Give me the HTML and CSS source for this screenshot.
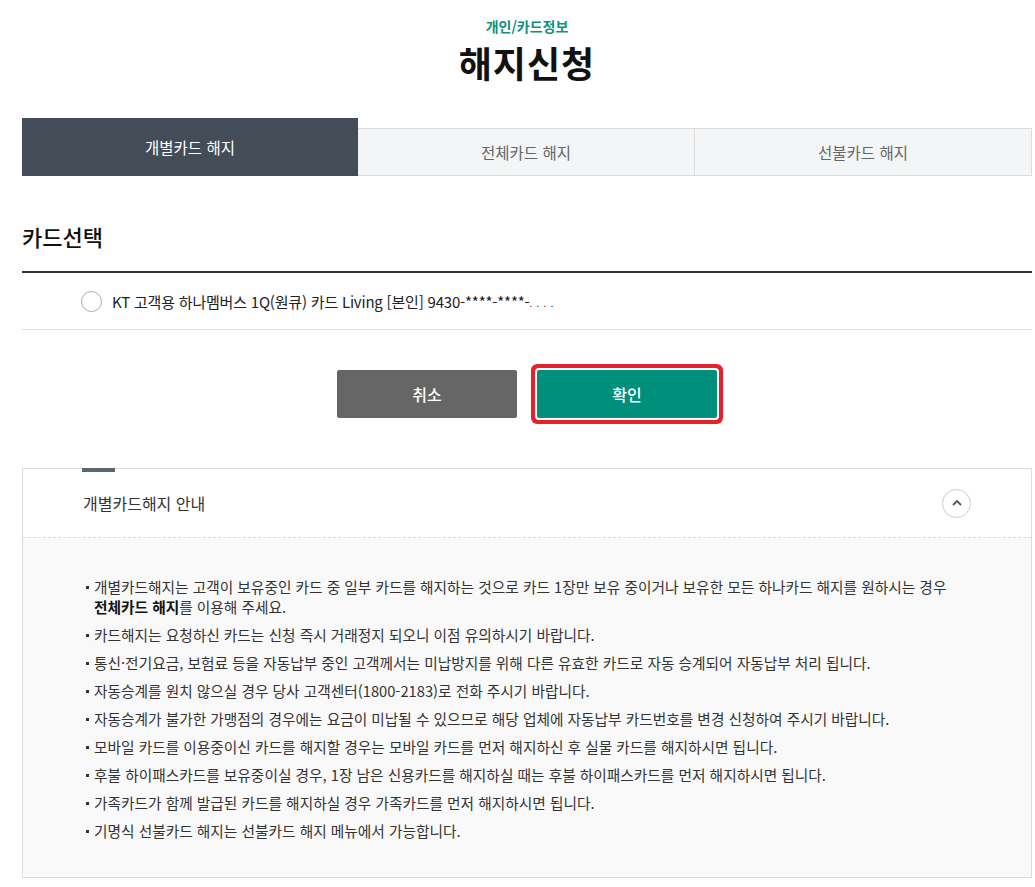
FILE: index.html
```html
<!DOCTYPE html>
<html lang="ko">
<head>
<meta charset="utf-8">
<link rel="stylesheet" href="styles.css">
</head>
<body>
<div class="page">
  <header class="head">
    <p class="crumb">개인/카드정보</p>
    <h1 class="title">해지신청</h1>
  </header>

  <nav class="tabs">
    <div class="tab active">개별카드 해지</div>
    <div class="tab">전체카드 해지</div>
    <div class="tab">선불카드 해지</div>
  </nav>

  <h2 class="sec-title">카드선택</h2>
  <div class="card-list">
    <label class="card-row">
      <span class="radio"></span>
      <span class="card-name">KT 고객용 하나멤버스 1Q(원큐) 카드 Living [본인] 9430-****-****-<span class="mask">. . . .</span></span>
    </label>
  </div>

  <div class="btns">
    <button class="btn btn-cancel">취소</button>
    <button class="btn btn-ok">확인</button>
  </div>

  <section class="guide">
    <div class="guide-head">
      <span class="guide-mark"></span>
      <span class="guide-title">개별카드해지 안내</span>
      <span class="toggle">
        <svg width="12" height="8" viewBox="0 0 12 8"><path d="M2 6 L6 2 L10 6" fill="none" stroke="#555" stroke-width="1.8"/></svg>
      </span>
    </div>
    <div class="guide-body">
      <ul class="notes">
        <li>개별카드해지는 고객이 보유중인 카드 중 일부 카드를 해지하는 것으로 카드 1장만 보유 중이거나 보유한 모든 하나카드 해지를 원하시는 경우<br><strong>전체카드 해지</strong>를 이용해 주세요.</li>
        <li>카드해지는 요청하신 카드는 신청 즉시 거래정지 되오니 이점 유의하시기 바랍니다.</li>
        <li>통신·전기요금, 보험료 등을 자동납부 중인 고객께서는 미납방지를 위해 다른 유효한 카드로 자동 승계되어 자동납부 처리 됩니다.</li>
        <li>자동승계를 원치 않으실 경우 당사 고객센터(1800-2183)로 전화 주시기 바랍니다.</li>
        <li>자동승계가 불가한 가맹점의 경우에는 요금이 미납될 수 있으므로 해당 업체에 자동납부 카드번호를 변경 신청하여 주시기 바랍니다.</li>
        <li>모바일 카드를 이용중이신 카드를 해지할 경우는 모바일 카드를 먼저 해지하신 후 실물 카드를 해지하시면 됩니다.</li>
        <li>후불 하이패스카드를 보유중이실 경우, 1장 남은 신용카드를 해지하실 때는 후불 하이패스카드를 먼저 해지하시면 됩니다.</li>
        <li>가족카드가 함께 발급된 카드를 해지하실 경우 가족카드를 먼저 해지하시면 됩니다.</li>
        <li>기명식 선불카드 해지는 선불카드 해지 메뉴에서 가능합니다.</li>
      </ul>
    </div>
  </section>
</div>
</body>
</html>
```

FILE: styles.css
```css
* { box-sizing: border-box; }
html, body { margin: 0; padding: 0; background: #fff; }
body {
  font-family: "Noto Sans CJK KR", "Noto Sans", sans-serif;
  color: #333;
  overflow: hidden;
}
.page {
  width: 1010px;
  margin-left: 22px;
}
.head {
  text-align: center;
  padding-top: 14px;
}
.crumb {
  margin: 0;
  font-size: 14px;
  line-height: 24px;
  font-weight: 700;
  color: #10907d;
}
.title {
  margin: 0;
  font-size: 36px;
  line-height: 48px;
  font-weight: 700;
  color: #111;
  letter-spacing: 1px;
}
.tabs {
  display: flex;
  align-items: flex-end;
  margin-top: 32px;
  height: 58px;
}
.tab {
  flex: 1;
  height: 48px;
  display: flex;
  align-items: center;
  justify-content: center;
  background: #f4f5f7;
  border: 1px solid #dcdcdc;
  border-left: none;
  font-size: 15.5px;
  color: #666;
}
.tab:last-child { border-right: 1px solid #dcdcdc; }
.tab.active {
  height: 58px;
  background: #434c57;
  border: none;
  color: #fff;
}
.sec-title {
  margin: 44px 0 0;
  font-size: 22px;
  line-height: 32px;
  font-weight: 500;
  color: #111;
}
.card-list {
  margin-top: 19px;
  border-top: 2px solid #333;
  border-bottom: 1px solid #dedede;
}
.card-row {
  display: flex;
  align-items: center;
  height: 56px;
  padding-left: 59px;
  gap: 10px;
}
.radio {
  width: 21px;
  height: 21px;
  border-radius: 50%;
  border: 1px solid #aaa;
  background: #fff;
  flex: none;
}
.card-name {
  font-size: 15px;
  color: #222;
  letter-spacing: -0.2px;
}
.mask { letter-spacing: 1px; font-size: 9px; vertical-align: middle; }
.btns {
  display: flex;
  justify-content: center;
  gap: 20px;
  margin-top: 40px;
}
.btn {
  width: 180px;
  height: 48px;
  border: none;
  border-radius: 2px;
  font-family: inherit;
  font-size: 16px;
  font-weight: 500;
  color: #fff;
  cursor: pointer;
}
.btn-cancel { background: #666; }
.btn-ok {
  background: #008f7b;
  box-shadow: 0 0 0 2px #fff, 0 0 0 6px #e5212b;
}
.guide {
  margin-top: 50px;
  border: 1px solid #dcdcdc;
  height: 410px;
  display: flex;
  flex-direction: column;
}
.guide-head {
  position: relative;
  height: 69px;
  display: flex;
  align-items: center;
  justify-content: space-between;
  padding: 0 60px;
  border-bottom: 1px dashed #d8d8d8;
  background: #fff;
}
.guide-mark {
  position: absolute;
  left: 59px;
  top: -1px;
  width: 33px;
  height: 4px;
  background: #5c6671;
}
.guide-title {
  font-size: 16px;
  color: #333;
}
.toggle {
  width: 29px;
  height: 29px;
  border-radius: 50%;
  border: 1px solid #ccc;
  display: flex;
  align-items: center;
  justify-content: center;
}
.guide-body {
  flex: 1;
  background: #f9f9f9;
  padding: 39px 40px 0 62px;
}
.notes {
  list-style: none;
  margin: 0;
  padding: 0;
}
.notes li {
  position: relative;
  padding-left: 9px;
  font-size: 14.7px;
  line-height: 20px;
  color: #333;
  margin-bottom: 8px;
}
.notes li::before {
  content: "";
  position: absolute;
  left: 1px;
  top: 9px;
  width: 3px;
  height: 3px;
  background: #333;
}
.notes strong { font-weight: 700; color: #111; }
```
